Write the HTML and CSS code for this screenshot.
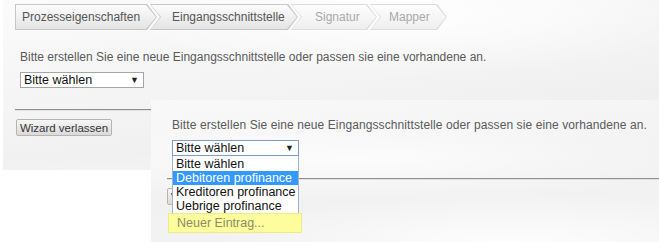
FILE: index.html
```html
<!DOCTYPE html>
<html lang="de">
<head>
<meta charset="utf-8">
<title>Wizard</title>
<link rel="stylesheet" href="styles.css">
</head>
<body>
<div class="desk">
  <section class="shot shot-back">
    <div class="page">
      <nav class="steps">
        <div class="tab tab-first done"><div class="tab-in">Prozesseigenschaften</div></div>
        <div class="tab tab-2 done"><div class="tab-in">Eingangsschnittstelle</div></div>
        <div class="tab tab-3 todo"><div class="tab-in">Signatur</div></div>
        <div class="tab tab-4 todo"><div class="tab-in">Mapper</div></div>
      </nav>
      <p class="intro">Bitte erstellen Sie eine neue Eingangsschnittstelle oder passen sie eine vorhandene an.</p>
      <div class="select"><span>Bitte wählen</span><span class="caret">▼</span></div>
      <hr class="rule">
      <button class="btn" type="button">Wizard verlassen</button>
    </div>
  </section>

  <section class="shot shot-front">
    <div class="page page-front">
      <p class="intro">Bitte erstellen Sie eine neue Eingangsschnittstelle oder passen sie eine vorhandene an.</p>
      <div class="select-wrap">
        <div class="select select-focus"><span>Bitte wählen</span><span class="caret">▼</span></div>
        <ul class="list">
          <li>Bitte wählen</li>
          <li class="sel">Debitoren profinance</li>
          <li>Kreditoren profinance</li>
          <li>Uebrige profinance</li>
        </ul>
      </div>
      <hr class="rule">
      <button class="btn" type="button">Wizard verlassen</button>
    </div>
    <div class="mark">Neuer Eintrag...</div>
  </section>
</div>
</body>
</html>
```

FILE: styles.css
```css
html, body {
  margin: 0;
  padding: 0;
  background: #fff;
}

body {
  font-family: "Liberation Sans", Arial, sans-serif;
  width: 659px;
  height: 242px;
  overflow: hidden;
}

.desk {
  position: relative;
  width: 659px;
  height: 242px;
}

.shot {
  overflow: hidden;
  box-sizing: border-box;
}

.shot-back {
  margin-left: 3px;
  width: 656px;
  height: 170px;
  background:
    radial-gradient(ellipse 420px 90px at 62% 8%, rgba(255,255,255,0.95), rgba(255,255,255,0) 70%),
    radial-gradient(ellipse 500px 70px at 30% 118%, rgba(255,255,255,0.7), rgba(255,255,255,0) 70%),
    linear-gradient(172deg, #fbfbfb 0%, #f4f4f4 45%, #eaeaea 100%);
}

.shot-front {
  position: absolute;
  left: 151px;
  top: 100px;
  width: 508px;
  height: 142px;
  background:
    radial-gradient(ellipse 520px 60px at 40% 42%, rgba(255,255,255,0.75), rgba(255,255,255,0) 70%),
    radial-gradient(ellipse 420px 70px at 70% 100%, rgba(255,255,255,0.85), rgba(255,255,255,0) 70%),
    linear-gradient(175deg, #f9f9f9 0%, #f1f1f1 55%, #f3f3f3 100%);
}

.page {
  padding: 4px 0 0 12px;
}

.page-front {
  padding: 18px 0 0 16px;
}

/* steps */
.steps {
  display: flex;
  height: 26px;
}

.tab {
  height: 26px;
  padding: 1px;
  box-sizing: border-box;
  clip-path: polygon(0 0, calc(100% - 10px) 0, 100% 50%, calc(100% - 10px) 100%, 0 100%, 10px 50%);
  background: #c6c6c6;
  margin-left: -7px;
  font-size: 12px;
  white-space: nowrap;
}

.tab-in {
  height: 100%;
  display: flex;
  align-items: center;
  box-sizing: border-box;
  clip-path: polygon(0 0, calc(100% - 10px) 0, 100% 50%, calc(100% - 10px) 100%, 0 100%, 10px 50%);
  background: linear-gradient(#fcfcfc, #e4e4e4);
  color: #565656;
}

.tab-first {
  margin-left: 0;
  clip-path: polygon(0 0, calc(100% - 10px) 0, 100% 50%, calc(100% - 10px) 100%, 0 100%);
  width: 142px;
}
.tab-first .tab-in {
  clip-path: polygon(0 0, calc(100% - 10px) 0, 100% 50%, calc(100% - 10px) 100%, 0 100%);
  padding-left: 6px;
}
.tab-2 { width: 148px; }
.tab-2 .tab-in { padding-left: 21px; }
.tab-3 { width: 86px; }
.tab-3 .tab-in { padding-left: 23px; }
.tab-4 { width: 77px; }
.tab-4 .tab-in { padding-left: 18px; }

.todo { background: #dcdcdc; }
.todo .tab-in {
  background: linear-gradient(#fdfdfd, #efefef);
  color: #a9a9a9;
}

/* text */
.intro {
  margin: 20px 0 0 5px;
  font-size: 12px;
  line-height: 15px;
  color: #5a5a5a;
  white-space: nowrap;
}
.page-front .intro {
  margin: 0 0 0 5px;
  letter-spacing: 0.1px;
}

.select {
  margin: 7px 0 0 5px;
  width: 124px;
  height: 16px;
  box-sizing: border-box;
  border: 1px solid #a6a6a6;
  background: #fff;
  display: flex;
  align-items: center;
  justify-content: space-between;
  padding: 0 4px 0 3px;
  font-size: 12.5px;
  color: #111;
  white-space: nowrap;
}
.caret {
  font-size: 9px;
  color: #222;
}

.select-wrap {
  position: relative;
  margin: 7px 0 0 5px;
  width: 127px;
}
.select-wrap .select {
  margin: 0;
  width: 127px;
}
.select-focus {
  border-color: #7f9dc6;
}

.list {
  position: absolute;
  left: 0;
  top: 100%;
  width: 127px;
  margin: 0;
  padding: 1px 0 6px;
  list-style: none;
  box-sizing: border-box;
  background: #fff;
  border: 1px solid #9fb3cc;
  border-top: none;
  z-index: 2;
  font-size: 12.5px;
  color: #111;
  white-space: nowrap;
}
.list li {
  line-height: 14px;
  padding-left: 3px;
}
.list .sel {
  background: #3399ff;
  color: #fff;
}

.rule {
  margin: 21px 0 0 0;
  border: 0;
  border-top: 1px solid #8f8f8f;
  border-bottom: 1px solid #e2e2e2;
  height: 0;
}
.page-front .rule {
  margin: 22px 0 0 0;
}

.btn {
  display: block;
  margin: 8px 0 0 1px;
  width: 96px;
  height: 17px;
  padding: 0;
  border: 1px solid #b4b4b4;
  border-radius: 2px;
  background: linear-gradient(#f7f7f7, #dadada);
  font-family: "Liberation Sans", Arial, sans-serif;
  font-size: 11.5px;
  color: #333;
  white-space: nowrap;
}
.page-front .btn {
  margin: 8px 0 0 0;
}

.mark {
  position: absolute;
  left: 17px;
  top: 113px;
  width: 134px;
  height: 20px;
  box-sizing: border-box;
  background: #fdfd9e;
  border: 1px solid #ecec86;
  z-index: 3;
  font-size: 12.5px;
  line-height: 18px;
  padding-left: 8px;
  color: #8c8c66;
}
```
